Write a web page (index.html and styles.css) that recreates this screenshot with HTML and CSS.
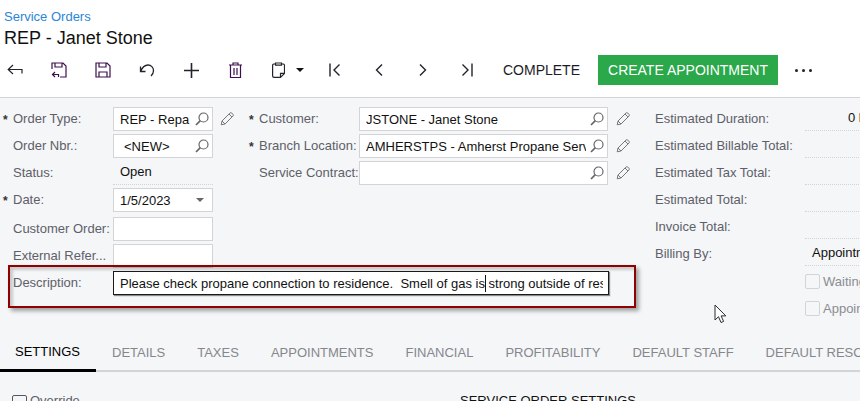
FILE: index.html
```html
<!DOCTYPE html>
<html lang="en">
<head>
    <meta charset="UTF-8">
    <title>Service Orders</title>
    <link rel="stylesheet" href="styles.css">
</head>
<body>
    <svg class="sprite" width="0" height="0">
        <symbol id="i-search" viewBox="0 0 14 14">
            <circle cx="8.500" cy="5.500" r="4.500" fill="none" stroke="currentColor" stroke-width="1.200"/>
            <path d="M5.300 8.700 1 13" fill="none" stroke="currentColor" stroke-width="1.700"/>
        </symbol>
        <symbol id="i-pencil" viewBox="0 0 14 14">
            <path d="M1.200 12.800 2 9 9.900 1.100a1.300 1.300 0 0 1 1.900 0l1.100 1.100a1.300 1.300 0 0 1 0 1.900L5 12ZM2 9l3 3M9 2l3 3" fill="none" stroke="currentColor" stroke-width="1"/>
        </symbol>
    </svg>

    <header class="page-head">
        <a class="crumb">Service Orders</a>
        <h1 class="page-title">REP - Janet Stone</h1>
        <div class="toolbar">
            <span class="tool"><svg width="16" height="14" viewBox="0 0 16 14"><path d="M6 2 1.200 6.500 6 11M1.200 6.500H15v4" fill="none" stroke="currentColor" stroke-width="1.200"/></svg></span>
            <span class="tool tool-save"><svg width="16" height="16" viewBox="0 0 16 16"><path d="M1 7V1h11l3 3v11H9M4 1v4h7V1M1.500 12.500h6v2.500M4 10l-2.500 2.500L4 15" fill="none" stroke="currentColor" stroke-width="1.200"/></svg></span>
            <span class="tool tool-save"><svg width="16" height="16" viewBox="0 0 16 16"><path d="M1 1h11l3 3v11H1ZM4 1v4h7V1M4 15v-5h8v5" fill="none" stroke="currentColor" stroke-width="1.200"/></svg></span>
            <span class="tool"><svg width="16" height="15" viewBox="0 0 16 15"><path d="M1.500 3.500v5h5M1.500 8.500C3 5 5.500 2 9 2a5.500 5.500 0 0 1 5.500 5.500c0 2.300-1 4.200-2.500 5.500" fill="none" stroke="currentColor" stroke-width="1.300"/></svg></span>
            <span class="tool"><svg width="15" height="15" viewBox="0 0 15 15"><path d="M7.500 0v15M0 7.500h15" fill="none" stroke="currentColor" stroke-width="1.600"/></svg></span>
            <span class="tool tool-save"><svg width="13" height="16" viewBox="0 0 13 16"><path d="M0 3h13M1.500 3v12.500h10V3M4 3V1h5v2M5 6v7M8 6v7" fill="none" stroke="currentColor" stroke-width="1.200"/></svg></span>
            <span class="tool tool-wide">
                <svg width="13" height="16" viewBox="0 0 13 16"><path d="M3.500 2H2a1.500 1.500 0 0 0-1.400 1v11A1.500 1.500 0 0 0 2 15.400h6.500l4-4V3a1.500 1.500 0 0 0-1.400-1H9.500M3.500 3.200V1h6v2.200ZM8.500 15.400v-4h4" fill="none" stroke="currentColor" stroke-width="1.200"/></svg>
                <i class="caret"></i>
            </span>
            <span class="tool"><svg width="12" height="14" viewBox="0 0 12 14"><path d="M1 .5v13M10.500 1.500 5 7l5.500 5.500" fill="none" stroke="currentColor" stroke-width="1.400"/></svg></span>
            <span class="tool"><svg width="8" height="14" viewBox="0 0 8 14"><path d="M7 1.500 1.500 7 7 12.500" fill="none" stroke="currentColor" stroke-width="1.400"/></svg></span>
            <span class="tool"><svg width="8" height="14" viewBox="0 0 8 14"><path d="M1 1.500 6.500 7 1 12.500" fill="none" stroke="currentColor" stroke-width="1.400"/></svg></span>
            <span class="tool"><svg width="12" height="14" viewBox="0 0 12 14"><path d="M11 .5v13M1.500 1.500 7 7l-5.500 5.500" fill="none" stroke="currentColor" stroke-width="1.400"/></svg></span>
            <span class="tool-text">COMPLETE</span>
            <span class="btn-green">CREATE APPOINTMENT</span>
            <span class="more"><i></i><i></i><i></i></span>
        </div>
    </header>

    <main class="form-area">
        <section class="form">
            <div class="col col-1">
                <div class="row"><span class="req">*</span><label>Order Type:</label><div class="field"><span class="val">REP - Repa</span><svg class="ico"><use href="#i-search"/></svg></div><svg class="ico pen"><use href="#i-pencil"/></svg></div>
                <div class="row"><label>Order Nbr.:</label><div class="field"><span class="val val-new">&lt;NEW&gt;</span><svg class="ico"><use href="#i-search"/></svg></div></div>
                <div class="row"><label>Status:</label><div class="plain">Open</div></div>
                <div class="row row-date"><span class="req">*</span><label>Date:</label><div class="field"><span class="val">1/5/2023</span><i class="caret caret-grey"></i></div></div>
                <div class="row"><label>Customer Order:</label><div class="field"></div></div>
                <div class="row"><label>External Refer...</label><div class="field"></div></div>
                <div class="row"><label>Description:</label><div class="field field-focus"><span class="val">Please check propane connection to residence.&nbsp; Smell of gas is<i class="text-caret"></i> strong outside of residence</span></div></div>
            </div>
            <div class="col col-2">
                <div class="row"><span class="req">*</span><label>Customer:</label><div class="field"><span class="val">JSTONE - Janet Stone</span><svg class="ico"><use href="#i-search"/></svg></div><svg class="ico pen"><use href="#i-pencil"/></svg></div>
                <div class="row"><span class="req">*</span><label>Branch Location:</label><div class="field"><span class="val">AMHERSTPS - Amherst Propane Services</span><svg class="ico"><use href="#i-search"/></svg></div><svg class="ico pen"><use href="#i-pencil"/></svg></div>
                <div class="row"><label>Service Contract:</label><div class="field"><span class="val"></span><svg class="ico"><use href="#i-search"/></svg></div><svg class="ico pen"><use href="#i-pencil"/></svg></div>
            </div>
            <div class="col col-3">
                <div class="row"><label>Estimated Duration:</label><div class="plain num">0 h</div></div>
                <div class="row"><label>Estimated Billable Total:</label><div class="plain num"></div></div>
                <div class="row"><label>Estimated Tax Total:</label><div class="plain num"></div></div>
                <div class="row"><label>Estimated Total:</label><div class="plain num"></div></div>
                <div class="row"><label>Invoice Total:</label><div class="plain num"></div></div>
                <div class="row"><label>Billing By:</label><div class="plain">Appointment</div></div>
                <div class="row row-check"><i class="check"></i><span class="check-text">Waiting for Parts</span></div>
                <div class="row row-check"><i class="check"></i><span class="check-text">Appointments Needed</span></div>
            </div>
        </section>

        <nav class="tabs">
            <span class="tab tab-active">SETTINGS</span>
            <span class="tab">DETAILS</span>
            <span class="tab">TAXES</span>
            <span class="tab">APPOINTMENTS</span>
            <span class="tab">FINANCIAL</span>
            <span class="tab">PROFITABILITY</span>
            <span class="tab">DEFAULT STAFF</span>
            <span class="tab">DEFAULT RESOURCES</span>
        </nav>

        <section class="settings">
            <div class="override"><i class="check check-dark"></i>Override</div>
            <div class="settings-title">SERVICE ORDER SETTINGS</div>
        </section>
    </main>

    <div class="callout"></div>
    <svg class="pointer" width="13" height="20" viewBox="0 0 13 20"><path d="M1 1v15l3.500-3.300L7 18.500l2.600-1.100-2.500-5.500h4.700Z" fill="#fff" stroke="#2b2b33" stroke-width="1"/></svg>
</body>
</html>
```

FILE: styles.css
```css
* {
    box-sizing: border-box;
}
html, body {
    height: 100%;
}
body {
    margin: 0;
    position: relative;
    overflow: hidden;
    background: #f5f6f8;
    color: #111;
    font-family: "Liberation Sans", Arial, sans-serif;
    font-size: 13px;
}
.sprite {
    position: absolute;
}
.page-head {
    height: 98px;
    padding: 9px 4px 0;
    background: #fff;
    border-bottom: 1px solid #d2d4d7;
}
.crumb {
    display: block;
    color: #2a86d8;
    font-size: 13px;
    line-height: 15px;
}
.page-title {
    margin: 3px 0 0;
    font-size: 18px;
    font-weight: normal;
    line-height: 22px;
}
.toolbar {
    display: flex;
    align-items: center;
    height: 30px;
    margin: 6px 0 0 -11px;
    color: #23232e;
}
.tool {
    display: flex;
    align-items: center;
    justify-content: center;
    width: 44px;
    height: 30px;
}
.tool-save {
    color: #3d0f4f;
}
.tool-wide {
    justify-content: flex-start;
    gap: 11px;
    width: 56px;
    padding-left: 15px;
}
.caret {
    width: 0;
    height: 0;
    border-left: 4px solid transparent;
    border-right: 4px solid transparent;
    border-top: 4px solid #111;
}
.caret-grey {
    margin-left: auto;
    margin-right: 5px;
    border-top-color: #666;
}
.tool-text {
    margin-left: 14px;
    margin-right: 18px;
    font-size: 14px;
    color: #1c1c24;
}
.btn-green {
    display: flex;
    align-items: center;
    width: 180px;
    height: 30px;
    padding-left: 10px;
    background: #2aa84a;
    color: #fff;
    font-size: 14px;
}
.more {
    display: flex;
    gap: 4px;
    margin-left: 17px;
}
.more i {
    width: 3px;
    height: 3px;
    background: #222;
    border-radius: 50%;
}
.form-area {
    overflow: hidden;
}
.form {
    display: flex;
    height: 246px;
    padding-top: 9px;
}
.col {
    flex: none;
}
.col-1 {
    width: 249px;
    padding-left: 13px;
}
.col-2 {
    width: 406px;
    padding-left: 10px;
}
.col-3 {
    width: 300px;
}
.row {
    position: relative;
    display: flex;
    align-items: center;
    height: 24px;
    margin-bottom: 3px;
}
.row-date {
    margin-bottom: 5px;
}
.row label {
    flex: none;
    padding-bottom: 2px;
    color: #5d6068;
    font-size: 13px;
    white-space: nowrap;
}
.col-1 label {
    width: 100px;
}
.col-2 label {
    width: 100px;
}
.col-3 label {
    width: 150px;
}
.req {
    position: absolute;
    top: 7px;
    left: -10px;
    color: #333;
    font-size: 12px;
    font-weight: bold;
    line-height: 12px;
}
.field {
    display: flex;
    align-items: center;
    flex: none;
    width: 100px;
    height: 24px;
    padding: 0 3px 0 6px;
    background: #fff;
    border: 1px solid #d2d4d7;
    color: #111;
    font-size: 13px;
}
.col-2 .field {
    width: 249px;
}
.val {
    flex: 1;
    min-width: 0;
    overflow: hidden;
    white-space: nowrap;
}
.val-new {
    padding-left: 4px;
}
.ico {
    flex: none;
    width: 14px;
    height: 14px;
    margin-left: 4px;
    color: #666;
}
.pen {
    margin-left: 7px;
    color: #777;
}
.col-2 .pen {
    margin-left: 8px;
}
.plain {
    flex: none;
    width: 100px;
    height: 24px;
    padding-left: 7px;
    line-height: 21px;
    border-bottom: 1px dotted #d2d4d7;
}
.num {
    padding-left: 43px;
}
.field-focus {
    width: 496px;
    padding-right: 5px;
    border-color: #1a1a1a;
    box-shadow: 1px 1px 1px #8a8a8a;
}
.text-caret {
    display: inline-block;
    width: 1px;
    height: 17px;
    margin-right: -1px;
    vertical-align: -4px;
    background: #111;
}
.row-check {
    padding-left: 150px;
}
.check {
    flex: none;
    width: 15px;
    height: 15px;
    margin-right: 3px;
    border: 1px solid #d2d4d7;
    border-radius: 2px;
}
.check-text {
    color: #8a8c92;
    white-space: nowrap;
}
.tabs {
    display: flex;
    height: 28px;
    border-bottom: 2px solid #d2d4d7;
    white-space: nowrap;
}
.tab {
    flex: none;
    height: 28px;
    padding: 1px 16px 0;
    color: #85878c;
    font-size: 13px;
}
.tab-active {
    width: 96px;
    padding-top: 0;
    padding-left: 15px;
    border-bottom: 3px solid #000;
    color: #000;
}
.settings {
    display: flex;
    padding: 21px 0 0 12px;
    font-size: 13px;
}
.override {
    display: flex;
    width: 448px;
    color: #5d6068;
}
.check-dark {
    border-color: #55575c;
    margin-top: 2px;
}
.settings-title {
    color: #111;
}
.callout {
    position: absolute;
    left: 8px;
    top: 265px;
    width: 628px;
    height: 43px;
    border: 2px solid #8f0000;
    box-shadow: 3px 3px 4px rgba(0, 0, 0, 0.35), inset 3px 3px 3px rgba(0, 0, 0, 0.18);
}
.pointer {
    position: absolute;
    left: 714px;
    top: 304px;
}
```
